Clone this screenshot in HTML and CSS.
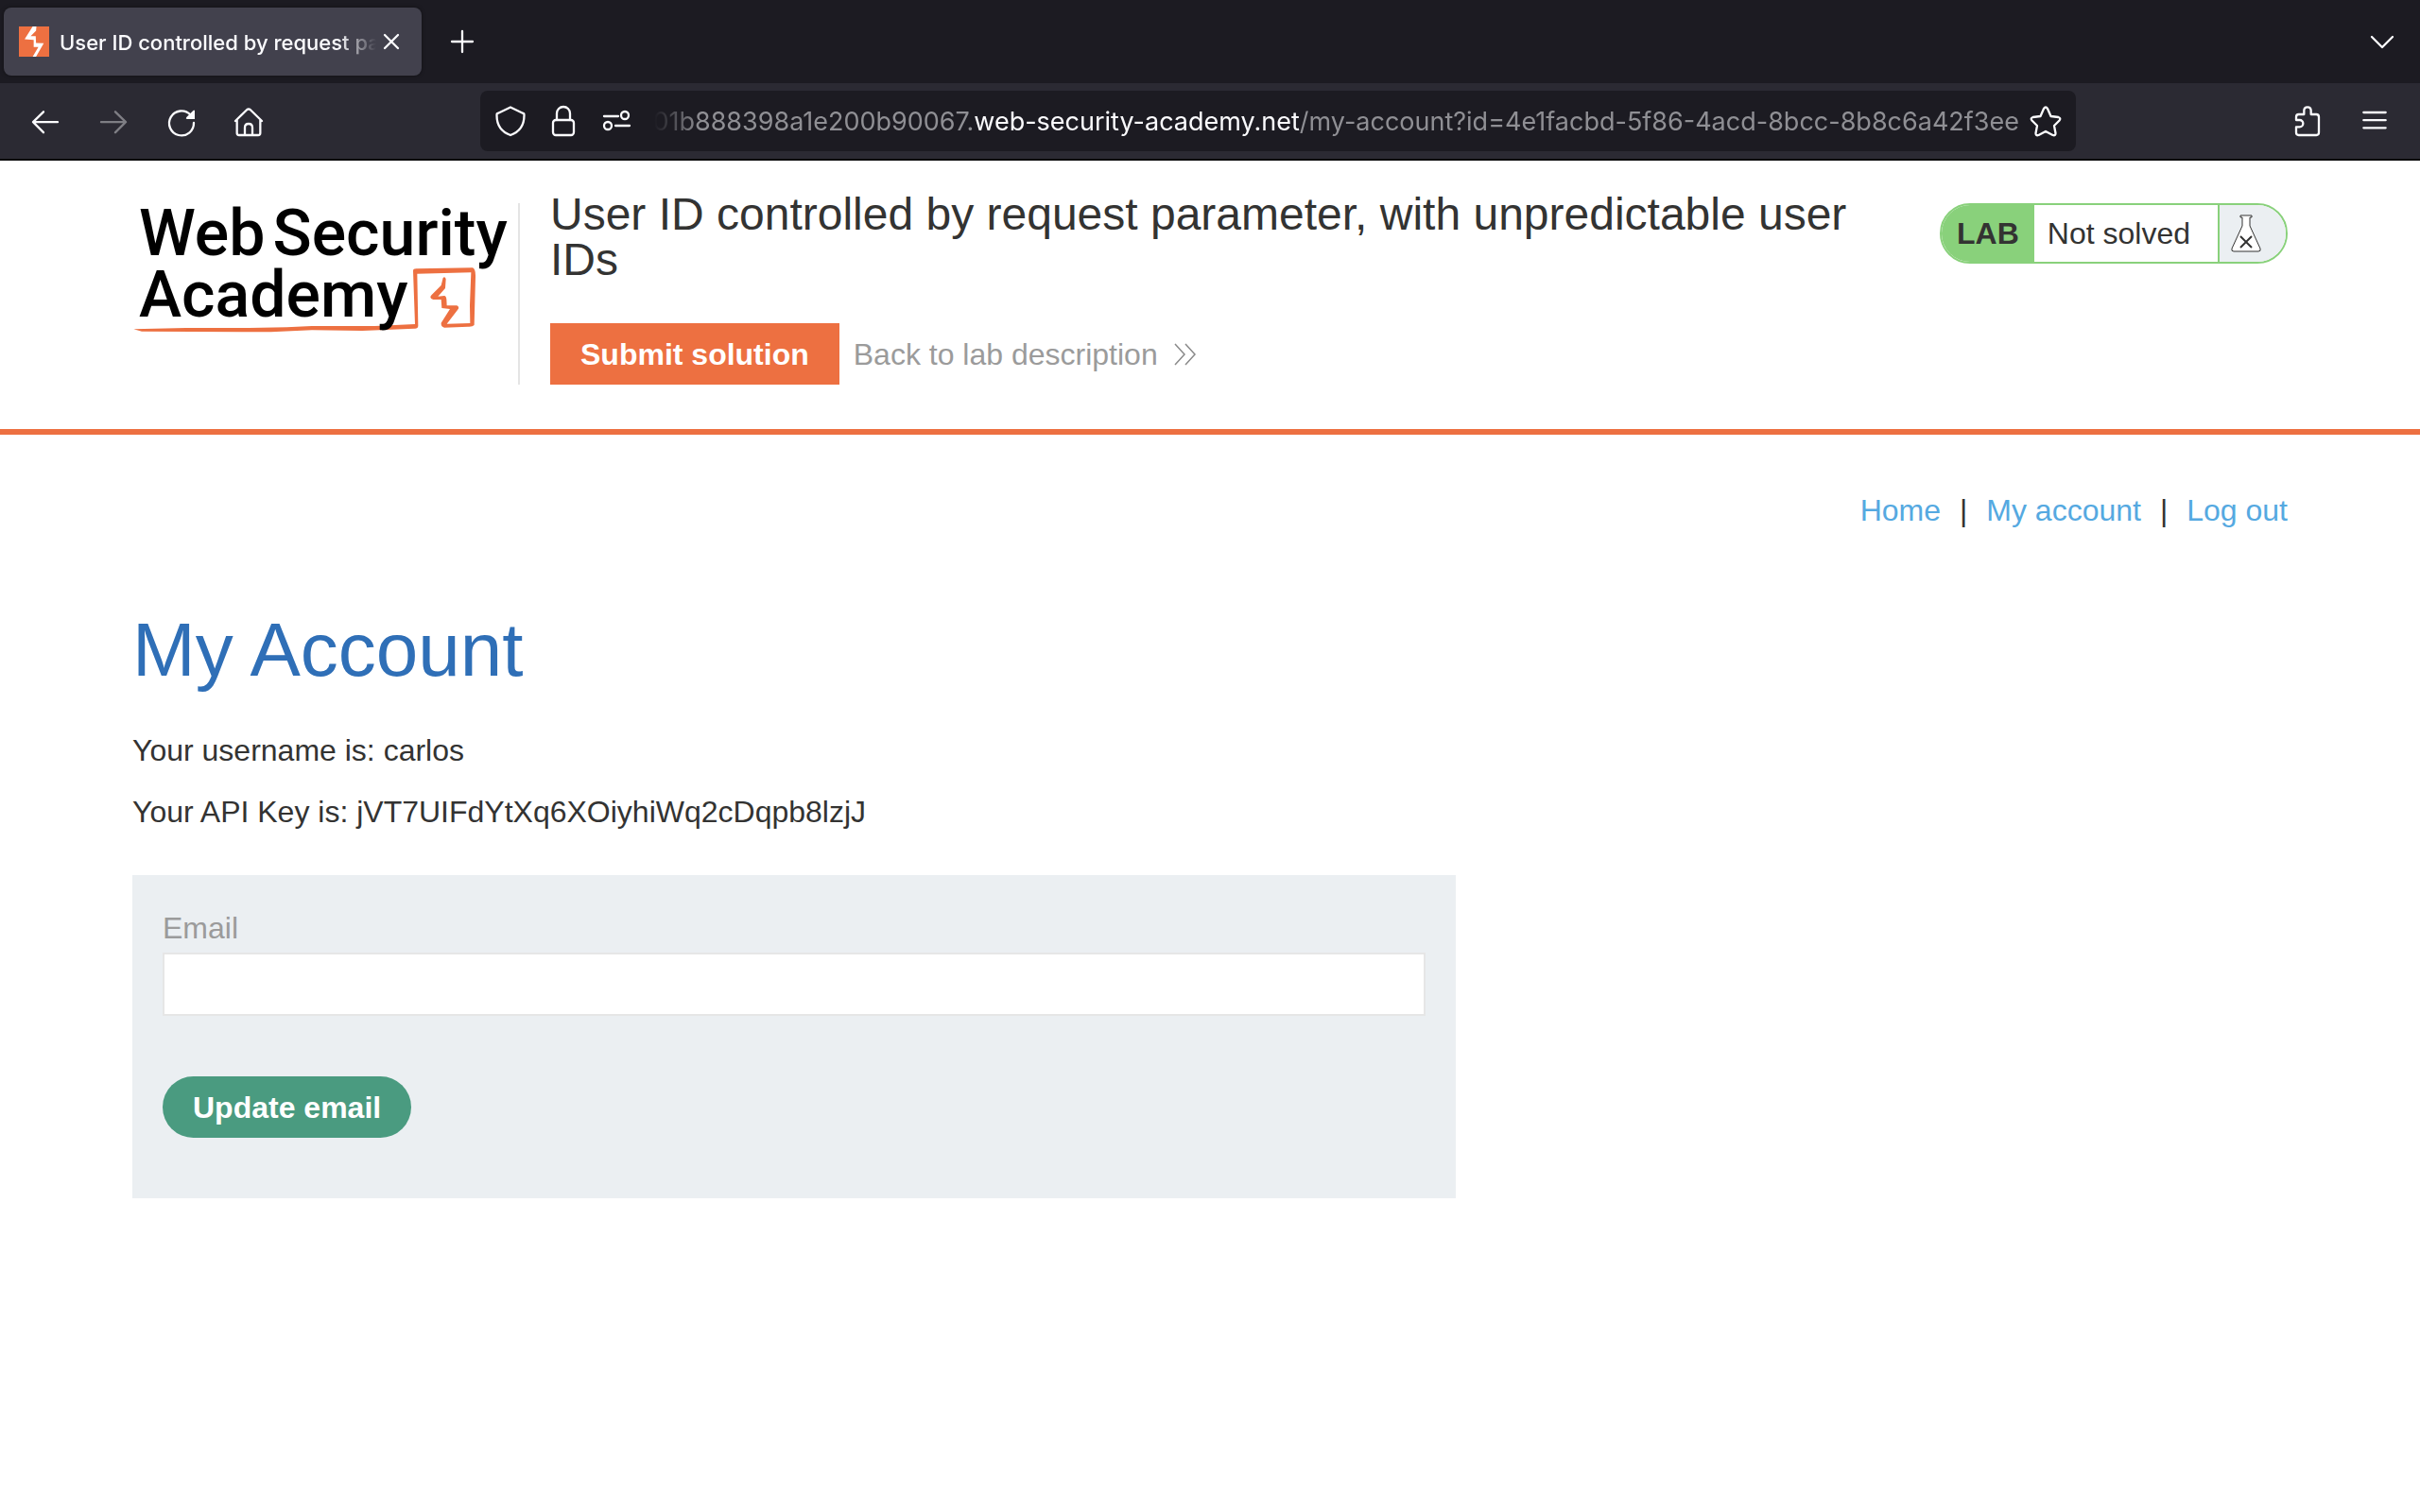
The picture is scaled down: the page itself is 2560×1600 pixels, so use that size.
FILE: index.html
```html
<!DOCTYPE html>
<html lang="en">
<head>
<meta charset="utf-8">
<title>User ID controlled by request parameter, with unpredictable user IDs</title>
<link rel="stylesheet" href="styles.css">
</head>
<body>
<div class="browser">
  <div class="tabs">
    <div class="tab">
      <svg class="favicon" viewBox="0 0 90 90"><path class="brand" d="M0 0h90v90H0z"/><path class="bolt" d="M41 0h11l-1 13-16 16h15l1 20 23 1-23 40H41l17-29H44V40L17 38z"/></svg>
      <span class="tab-title">User ID controlled by request parameter</span>
      <button class="tab-close" aria-label="Close tab"><svg class="icon icon-small" viewBox="0 0 16 16"><path d="M1 1l14 14M15 1L1 15"/></svg></button>
    </div>
    <button class="tab-button" aria-label="New tab"><svg class="icon icon-medium" viewBox="0 0 24 24"><path d="M12 1v22M1 12h22"/></svg></button>
    <button class="tab-button tab-list" aria-label="List all tabs"><svg class="icon icon-medium" viewBox="0 0 24 24"><path d="M1 7l11 11L23 7"/></svg></button>
  </div>
  <div class="toolbar">
    <div class="tools">
      <button class="tool" aria-label="Back"><svg class="icon" viewBox="96 336 96 96"><path d="M183 387.500h-78M138 355l-33 32.500 33 33"/></svg></button>
      <button class="tool" aria-label="Forward" disabled><svg class="icon" viewBox="312 336 96 96"><path d="M321 387.500h78M366 355l33 32.500-33 33"/></svg></button>
      <button class="tool" aria-label="Reload"><svg class="icon" viewBox="528 336 96 96"><path d="M604 364a39 39 0 1 0 11 26"/><path class="solid" d="M618 350v28h-25q-5-1-1-6l22-22z"/></svg></button>
      <button class="tool" aria-label="Home"><svg class="icon" viewBox="744 336 96 96"><path d="M747 384l37-36q5-4 10 0l37 36M752 381v41q0 7 7 7h60q7 0 7-7v-41M777 428v-23q0-12 12-12t12 12v23"/></svg></button>
    </div>
    <div class="address">
      <svg class="icon" viewBox="0 0 32 32"><path d="M16 1.500L29.500 8c1 0 1 1 1 2 0 12-6 18-14.500 21C7.500 28 1.500 22 1.500 10c0-1 0-2 1-2z"/></svg>
      <svg class="icon" viewBox="0 0 32 32"><rect x="5" y="15" width="22" height="16" rx="3"/><path d="M9 15V8a7 7 0 0 1 14 0v7"/></svg>
      <svg class="icon" viewBox="0 0 32 32"><path d="M3 11h15M15 21h15"/><circle cx="25" cy="10" r="4"/><circle cx="7" cy="21" r="4"/></svg>
      <div class="url" role="textbox" aria-label="Address"><span>01b888398a1e200b90067.</span><span class="host">web-security-academy.net</span><span>/my-account?id=4e1facbd-5f86-4acd-8bcc-8b8c6a42f3ee</span></div>
      <button class="bookmark" aria-label="Bookmark this page"><svg class="icon" viewBox="0 0 32 32"><path d="M14 3q2-3 4 0l3.500 8 8 1q3 1 1 3.500L25 21l1.500 8q0 3-3 2L16 27l-7.500 4q-3 1-3-2L7 21l-5.500-5.500q-2-2.500 1-3.500l8-1z"/></svg></button>
    </div>
    <div class="tools">
      <button class="tool" aria-label="Extensions"><svg class="icon" viewBox="132 336 96 96"><path d="M147 381v-10q0-8 8-8h17v-12q0-11 11-11t11 11v12h17q8 0 8 8v50q0 8-8 8h-56q-8 0-8-8v-18h11a11 11 0 0 0 0-22z"/></svg></button>
      <button class="tool" aria-label="Menu"><svg class="icon" viewBox="348 336 96 96"><path d="M361 357h70M361 381.500h70M361 406h70"/></svg></button>
    </div>
  </div>
</div>

<header class="lab-header">
  <a class="logo" href="#" aria-label="Web Security Academy">
    <svg class="logo-mark" viewBox="30 75 1230 576"><path d="M34 475L200 471 400 471 520 469 600 465 800 465 927 459 921 290Q921 282 934 283L1110 280Q1120 284 1119 310L1115 462Q1110 468 1095 467L1020 470Q1009 468 1010 455L1038 411 1012 408 1010 381 985 381Q970 376 980 366L1010 336 1016 312Q1022 306 1025 316L1023 345 1000 371 1020 369Q1026 370 1027 380L1028 400 1060 400Q1070 405 1062 414L1028 458 1102 456 1101 400 1105 295 934 299 937 465Q936 474 925 473L760 480 600 478 470 484 60 482Z"/></svg>
    <span class="logo-line"><span>Web</span><span>Security</span></span>
    <span class="logo-line">Academy</span>
  </a>
  <div class="lab-title">
    <h2>User ID controlled by request parameter, with unpredictable user IDs</h2>
    <div class="lab-actions">
      <button class="submit">Submit solution</button>
      <a class="back" href="#">Back to lab description <svg class="arrows" viewBox="0 0 24 24"><path d="M1 1l10 11L1 23M12 1l10 11-10 11"/></svg></a>
    </div>
  </div>
  <div class="status">
    <span class="status-lab">LAB</span>
    <span class="status-text">Not solved</span>
    <span class="status-icon"><svg class="flask" viewBox="0 0 32 40"><path d="M10 1h12v2h-2v9l11 24q1 3-2 3H3q-3 0-2-3l11-24V3h-2z"/><path class="cross" d="M10 23l12 12M22 23L10 35"/></svg></span>
  </div>
</header>

<main class="page">
  <nav class="links"><a href="#">Home</a><span>|</span><a href="#">My account</a><span>|</span><a href="#">Log out</a></nav>
  <h1>My Account</h1>
  <p>Your username is: carlos</p>
  <p>Your API Key is: jVT7UIFdYtXq6XOiyhiWq2cDqpb8lzjJ</p>
  <form class="account-form">
    <label for="email">Email</label>
    <input id="email" type="email" name="email">
    <button class="update" type="button">Update email</button>
  </form>
</main>
</body>
</html>
```
FILE: styles.css
```css
* { box-sizing: border-box; }

body {
  margin: 0;
  background: #fff;
  color: #333332;
  font: 32px/48px "Liberation Sans", Arial, sans-serif;
}

h1, h2, p { margin: 0; font-weight: 400; }
a { text-decoration: none; }
button { margin: 0; padding: 0; border: 0; background: none; color: inherit; font: inherit; }

/* Browser window */
.browser {
  color: #fbfbfe;
  font-family: Inter, sans-serif;
  border-bottom: 2px solid #0c0c0d;
}

.icon {
  display: block;
  flex: none;
  width: 32px;
  height: 32px;
  overflow: visible;
  fill: none;
  stroke: currentColor;
  stroke-width: 2.3;
  stroke-linecap: round;
  stroke-linejoin: round;
}
.icon * { vector-effect: non-scaling-stroke; }
.icon .solid { fill: currentColor; stroke: none; }
.icon-small { width: 16px; height: 16px; }
.icon-medium { width: 24px; height: 24px; }

.tabs {
  display: flex;
  align-items: center;
  padding: 8px 4px;
  background: #1c1b22;
}
.tab {
  display: flex;
  align-items: center;
  width: 442px;
  height: 72px;
  padding: 0 16px;
  border-radius: 8px;
  background: #42414d;
  box-shadow: 0 0 4px rgba(0, 0, 0, .4);
}
.favicon { flex: none; width: 32px; height: 32px; }
.brand { fill: #ed7041; }
.bolt { fill: #fff; }
.tab-title {
  flex: 1;
  margin-left: 11px;
  padding-top: 2px;
  overflow: hidden;
  white-space: nowrap;
  font-size: 22px;
  font-weight: 500;
  line-height: 32px;
  mask-image: linear-gradient(to left, transparent, #000 40px);
}
.tab-close { padding: 8px; }
.tab-button { display: grid; place-items: center; width: 64px; height: 64px; margin-left: 11px; }
.tab-list { margin: 0 4px 0 auto; }

.toolbar {
  display: flex;
  align-items: center;
  padding: 8px 16px;
  background: #2b2a33;
}
.tools { display: flex; gap: 8px; }
.tool { display: grid; place-items: center; width: 64px; height: 64px; }
.tool:disabled { opacity: .4; }

.address {
  display: flex;
  flex: 1;
  align-items: center;
  gap: 24px;
  min-width: 0;
  height: 64px;
  margin: 0 212px;
  padding: 0 16px;
  border-radius: 8px;
  background: #1c1b22;
}
.url {
  display: flex;
  flex: 1;
  justify-content: flex-end;
  min-width: 0;
  padding-top: 2px;
  overflow: hidden;
  white-space: nowrap;
  color: #8f8f94;
  font-size: 27px;
  mask-image: linear-gradient(to right, transparent, #000 48px);
}
.host { color: #fbfbfe; }
.bookmark { margin-left: -12px; }

/* Lab banner */
.lab-header {
  display: flex;
  align-items: flex-start;
  padding: 33px 140px 47px;
  border-bottom: 6px solid #ed7041;
}
.logo {
  position: relative;
  flex: none;
  width: 410px;
  height: 192px;
  margin-top: 12px;
  padding-left: 7px;
  border-right: 2px solid #e4e4e4;
  color: #000;
  font: 500 68px/65px Roboto, sans-serif;
}
.logo-mark { position: absolute; left: 0; top: 0; width: 410px; height: 192px; fill: #ed7041; }
.logo-line { position: relative; display: flex; gap: 8px; }

.lab-title { flex: 1; padding: 0 60px 0 32px; }
.lab-title h2 { font-size: 48px; line-height: 48px; }
.lab-actions { display: flex; align-items: center; gap: 15px; margin-top: 43px; }
.submit {
  height: 65px;
  padding: 0 32px;
  background: #ed7041;
  color: #fff;
  font-weight: 700;
}
.back { display: flex; align-items: center; gap: 17px; color: #9b9b9b; }
.arrows { width: 24px; height: 24px; fill: none; stroke: #8a8a8a; stroke-width: 1.5; }

.status {
  display: flex;
  flex: none;
  height: 64px;
  margin-top: 12px;
  overflow: hidden;
  border: 2px solid #89d17b;
  border-radius: 32px;
  line-height: 60px;
}
.status-lab { padding: 0 16px; background: #89d17b; font-weight: 700; }
.status-text { padding: 0 29px 0 14px; border-right: 2px solid #89d17b; }
.status-icon { width: 70px; padding: 10px 12px; background: #ebeff2; }
.flask { display: block; width: 32px; height: 40px; fill: #fff; stroke: #333332; stroke-width: 1; }
.flask .cross { stroke-width: 2; }

/* Account page */
.page { padding: 56px 140px; }
.links { display: flex; justify-content: flex-end; gap: 20px; }
.links a { color: #55a9e1; }
h1 { margin: 84px 0 42px; color: #2f6fb7; font-size: 80px; line-height: 80px; }
p { margin-bottom: 17px; }

.account-form {
  display: flex;
  flex-direction: column;
  align-items: flex-start;
  max-width: 1400px;
  margin-top: 43px;
  padding: 32px 32px 64px;
  background: #ebeff2;
}
.account-form label { color: #9b9b9b; }
.account-form input {
  width: 100%;
  height: 67px;
  margin: 2px 0 64px;
  padding: 0 16px;
  border: 2px solid #e6e6e6;
  background: #fff;
  font: inherit;
}
.update {
  height: 65px;
  padding: 0 32px;
  border-radius: 33px;
  background: #4a9b80;
  color: #fff;
  font-weight: 700;
}
```
